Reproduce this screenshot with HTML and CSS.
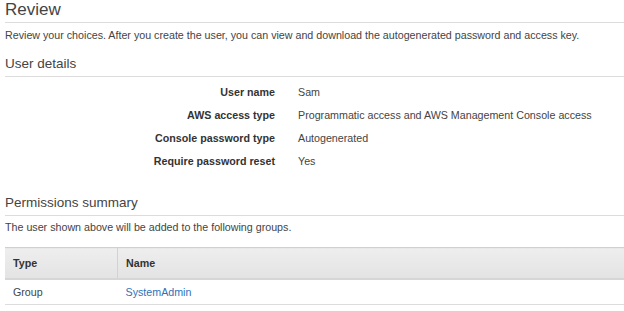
FILE: index.html
```html
<!DOCTYPE html>
<html lang="en">
<head>
  <meta charset="UTF-8">
  <title>Review</title>
  <link rel="stylesheet" href="styles.css">
</head>
<body>
  <h1 class="page-title">Review</h1>
  <p class="intro">Review your choices. After you create the user, you can view and download the autogenerated password and access key.</p>

  <h2 class="section-title">User details</h2>
  <dl class="details">
    <dt>User name</dt>
    <dd>Sam</dd>
    <dt>AWS access type</dt>
    <dd>Programmatic access and AWS Management Console access</dd>
    <dt>Console password type</dt>
    <dd>Autogenerated</dd>
    <dt>Require password reset</dt>
    <dd>Yes</dd>
  </dl>

  <h2 class="section-title perms">Permissions summary</h2>
  <p class="intro intro-tight">The user shown above will be added to the following groups.</p>

  <table class="groups">
    <thead>
      <tr>
        <th class="col-type">Type</th>
        <th>Name</th>
      </tr>
    </thead>
    <tbody>
      <tr>
        <td>Group</td>
        <td><a href="#">SystemAdmin</a></td>
      </tr>
    </tbody>
  </table>
</body>
</html>
```

FILE: styles.css
```css
body {
  font-family: 'Liberation Sans', Arial, sans-serif;
  margin: 0;
  padding: 0 0 0 5px;
  background: #fff;
  color: #444;
  font-size: 10.7px;
}

/* Headings with underline */
.page-title {
  margin: 0;
  height: 22px;
  font-size: 17px;
  font-weight: 400;
  line-height: 20px;
  color: #444;
  border-bottom: 1px solid #dcdcdc;
}

.section-title {
  margin: 12px 0 0 0;
  height: 22px;
  font-size: 13.5px;
  font-weight: 400;
  line-height: 20px;
  color: #444;
  border-bottom: 1px solid #dcdcdc;
}

.section-title.perms {
  margin-top: 25px;
}

.intro {
  margin: 6px 0 0 0;
  line-height: 13px;
  color: #444;
}

.intro.intro-tight {
  margin-top: 5px;
}

/* User details list */
.details {
  display: grid;
  grid-template-columns: 270px auto;
  column-gap: 23px;
  row-gap: 10px;
  margin: 9px 0 0 0;
  line-height: 13px;
}

.details dt {
  text-align: right;
  font-weight: 700;
  color: #333;
}

.details dd {
  margin: 0;
  color: #444;
}

/* Groups table */
.groups {
  margin-top: 13px;
  width: 100%;
  border-collapse: collapse;
}

.groups th {
  text-align: left;
  font-weight: 700;
  color: #333;
  height: 30px;
  padding: 0 8px;
  background: linear-gradient(#eeeeee, #e3e3e3);
  border-top: 1px solid #d0d0d0;
  border-bottom: 2px solid #d6d6d6;
}

.groups th.col-type {
  width: 96px;
  border-right: 1px solid #d2d2d2;
}

.groups td {
  height: 24px;
  padding: 0 8px;
  border-bottom: 1px solid #dcdcdc;
}

.groups a {
  color: #2e73b8;
  text-decoration: none;
}
```
